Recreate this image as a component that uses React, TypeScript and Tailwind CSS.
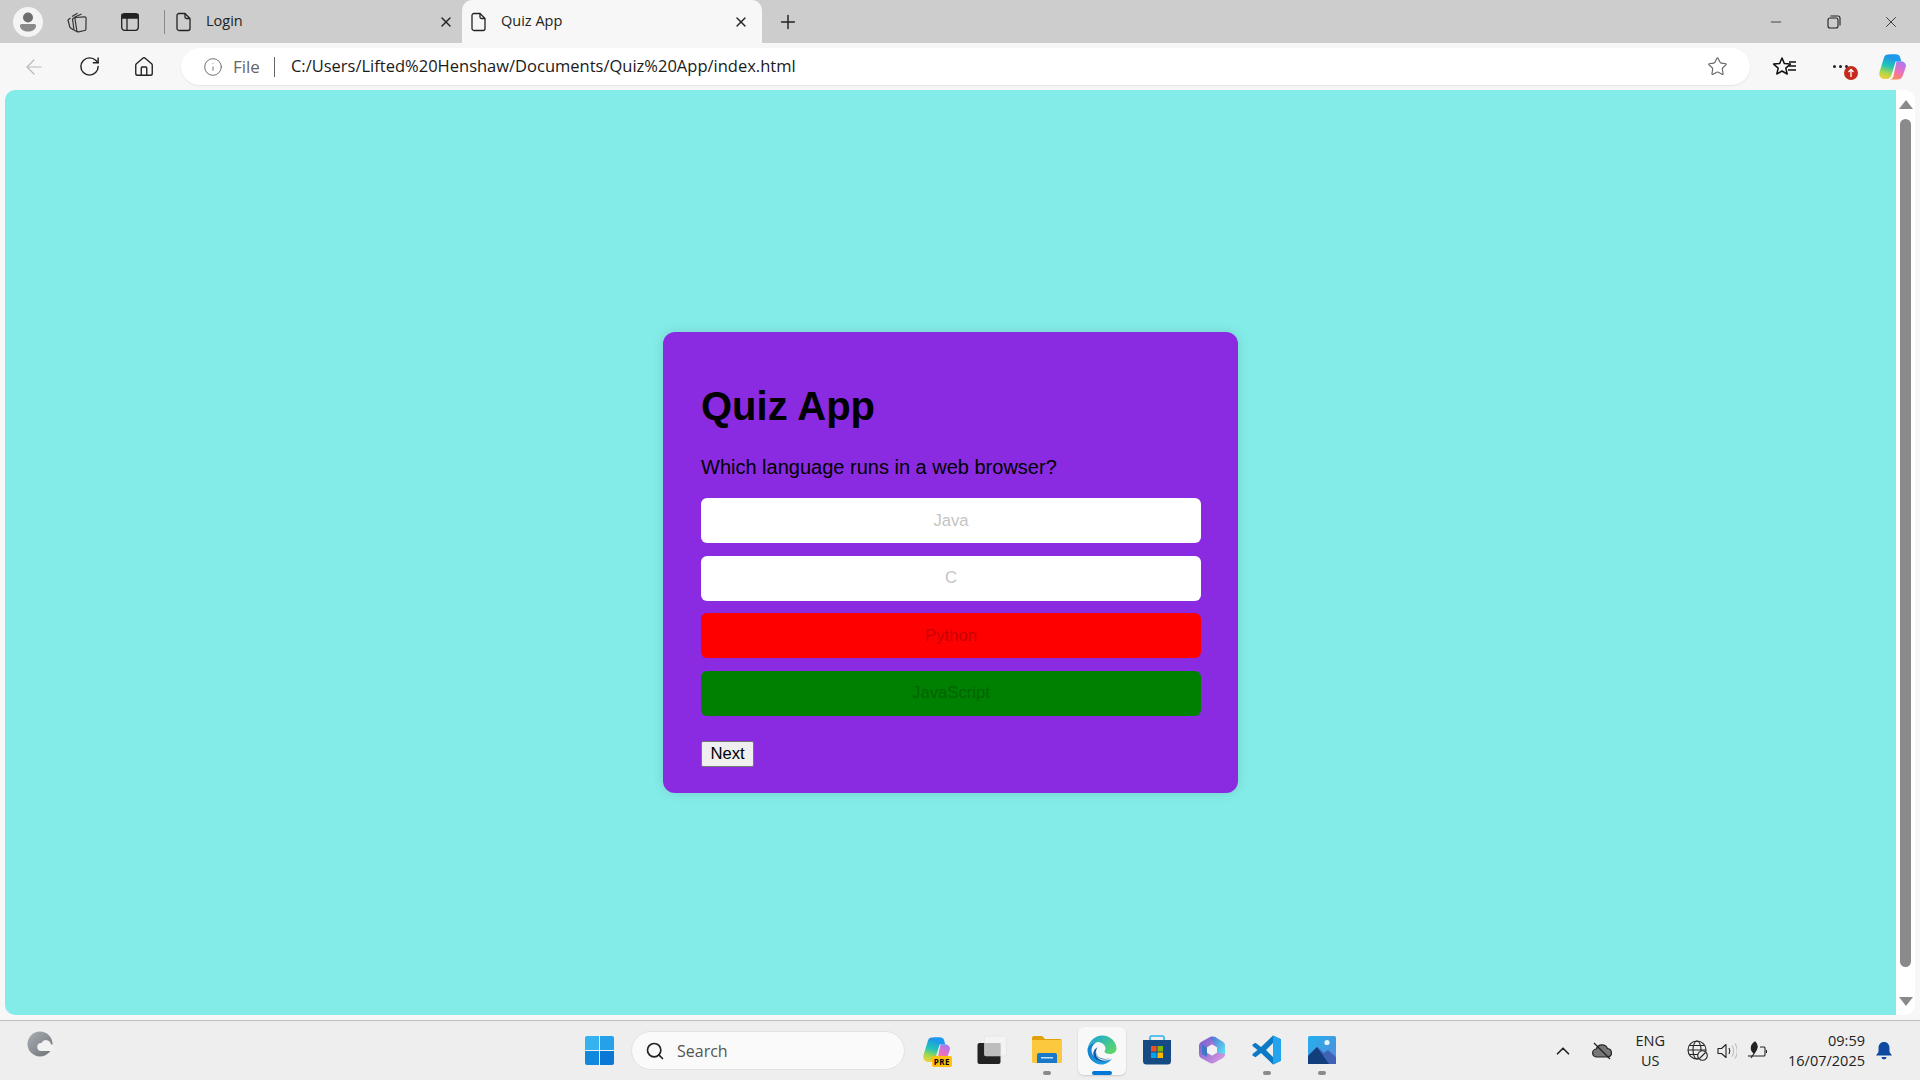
import React from "react";
import { Plus, X, RotateCw, Home, ArrowLeft, Info, Star, ChevronUp, Search, Minus } from "lucide-react";

function FileIcon() {
  return (
    <svg width="16" height="20" viewBox="0 0 16 20" fill="none" stroke="#222" strokeWidth="1.3">
      <path d="M3 1.500h6l5 5V16.500a2 2 0 0 1-2 2H3a2 2 0 0 1-2-2V3.500a2 2 0 0 1 2-2z" />
      <path d="M9 1.500V5a1.500 1.500 0 0 0 1.500 1.500H14" />
    </svg>
  );
}

function Tab({ title, active }: { title: string; active?: boolean }) {
  return (
    <div className={active ? "flex h-[43px] w-[300px] items-center rounded-t-[10px] bg-[#f7f7f7] pl-[9px] pr-[13px]" : "flex h-[43px] w-[289px] items-center pl-[3px] pr-[8px]"}>
      <FileIcon />
      <span className="ml-[14px] flex-1 pb-[2px] text-[14.5px] text-[#222]">{title}</span>
      <X size={16} strokeWidth={2} color="#222" />
    </div>
  );
}

function Copilot({ size, id }: { size: number; id: string }) {
  return (
    <svg width={size} height={size} viewBox="0 0 28 28">
      <defs>
        <linearGradient id={`${id}a`} x1="0.500" y1="0" x2="0.300" y2="1">
          <stop offset="0" stopColor="#1e8fef" />
          <stop offset="0.45" stopColor="#22c4b8" />
          <stop offset="0.75" stopColor="#a8d84a" />
          <stop offset="1" stopColor="#f4d03a" />
        </linearGradient>
        <linearGradient id={`${id}b`} x1="0.700" y1="0" x2="0.300" y2="1">
          <stop offset="0" stopColor="#a979f0" />
          <stop offset="0.5" stopColor="#ea6fc4" />
          <stop offset="1" stopColor="#ff8a50" />
        </linearGradient>
      </defs>
      <path d="M9 1.500h7.500c1 0 1.500.5 1.800 1.500L12.500 22c-.7 2.500-2.500 4-5 4H6c-4 0-6.500-3-5.500-7L5 4.500c.5-2 2-3 4-3z" fill={`url(#${id}a)`} />
      <path d="M17.500 8.500h5c3 0 5 2.500 4.300 5.500L24 22c-.8 3-3 4.500-6 4.500h-7.500c2 0 3.500-1.500 4-3.500z" fill={`url(#${id}b)`} />
      <path d="M10 1.500h8c1.500 0 2.500 1 3 2.500l1.300 4.500H17z" fill="#1c9af0" />
    </svg>
  );
}

function TabStrip() {
  return (
    <div className="flex h-[43px] items-center bg-[#cdcdcd] pl-[13px]">
      <div className="flex h-[30px] w-[30px] items-center justify-center rounded-full bg-[#f4f4f4]">
        <svg width="22" height="24" viewBox="0 0 22 24" fill="#6e6e6e">
          <circle cx="11" cy="7.500" r="5" />
          <path d="M3 15.500c0-1 .8-1.500 2-1.500h12c1.200 0 2 .5 2 1.500v.5c0 3.500-4 5.500-8 5.500s-8-2-8-5.500z" fill="#8a8a8a" />
        </svg>
      </div>
      <svg className="ml-[21px]" width="24" height="24" viewBox="0 0 24 24" fill="none" stroke="#333" strokeWidth="1.200" strokeLinejoin="round">
        <path d="M11.500 7.500l9-.7a1.500 1.500 0 0 1 1.600 1.500l-.2 10.700a1.500 1.500 0 0 1-1.300 1.500l-6 1.300a1.500 1.500 0 0 1-1.800-1.300L11 9a1.500 1.500 0 0 1 .5-1.500z" />
        <path d="M11 7.500l-.5-.3 7-3.200M10.500 7.500L8.500 9l1.500 11 3.500 2" />
        <path d="M8 6.500l5.500-3.300M6.500 8l-2.500 2 2 7.500 3.500 2.500" />
      </svg>
      <svg className="ml-[33px]" width="18" height="18" viewBox="0 0 18 18" fill="none" stroke="#222" strokeWidth="1.300">
        <rect x="0.700" y="0.700" width="16.600" height="16.600" rx="3" />
        <path d="M1 1.500h16v3.500H1z" fill="#222" />
        <path d="M6 5v12" />
      </svg>
      <span className="ml-[25px] h-[24px] w-[1px] bg-[#8a8a8a]" />
      <div className="ml-[8px]"><Tab title="Login" /></div>
      <Tab title="Quiz App" active />
      <Plus size={22} strokeWidth={1.6} color="#222" className="ml-[15px]" />
      <div className="flex-1" />
      <div className="flex items-center pr-[20px]">
        <Minus size={16} strokeWidth={1.2} color="#222" />
        <svg className="ml-[43px]" width="14" height="14" viewBox="0 0 14 14" fill="none" stroke="#222" strokeWidth="1.100">
          <rect x="1" y="3" width="10" height="10" rx="2" />
          <path d="M3.500 1h7.500a2 2 0 0 1 2 2v7.500" />
        </svg>
        <X size={18} strokeWidth={1.1} color="#222" className="ml-[41px]" />
      </div>
    </div>
  );
}

function Toolbar() {
  return (
    <div className="flex h-[47px] items-center bg-[#f7f7f7] pl-[22px]">
      <ArrowLeft size={24} strokeWidth={1.2} color="#b9b9b9" />
      <RotateCw size={23} strokeWidth={1.5} color="#222" className="ml-[32px]" />
      <Home size={22} strokeWidth={1.5} color="#222" className="ml-[32px]" />
      <div className="ml-[26px] flex h-[37px] w-[1569px] items-center rounded-full bg-white pl-[22px] pr-[22px] shadow-[0_1px_2px_rgba(0,0,0,0.08)]">
        <Info size={20} strokeWidth={1.1} color="#666" />
        <span className="ml-[10px] text-[17px] text-[#666]">File</span>
        <span className="ml-[14px] h-[20px] w-[1px] bg-[#666]" />
        <span className="ml-[16px] flex-1 text-[16.5px] text-[#1a1a1a]">C:/Users/Lifted%20Henshaw/Documents/Quiz%20App/index.html</span>
        <Star size={21} strokeWidth={1.3} color="#666" />
      </div>
      <svg className="ml-[22px]" width="26" height="24" viewBox="0 0 26 24" fill="none" stroke="#111" strokeWidth="1.500" strokeLinejoin="round">
        <path d="M10 3l2.400 5.600 6 .5-4.600 4 1.400 5.900L10 16l-5.200 3 1.400-5.900-4.600-4 6-.5z" />
        <path d="M17 7h7M17 11h7M16 15h8" />
      </svg>
      <div className="relative ml-[29px] flex w-[26px] justify-center">
        <div className="flex gap-[3px]">
          <span className="h-[3px] w-[3px] rounded-full bg-[#222]" />
          <span className="h-[3px] w-[3px] rounded-full bg-[#222]" />
          <span className="h-[3px] w-[3px] rounded-full bg-[#222]" />
        </div>
        <div className="absolute left-[17px] top-[1px] flex h-[14px] w-[14px] items-center justify-center rounded-full bg-[#c42b1c]">
          <svg width="8" height="10" viewBox="0 0 8 10" fill="none" stroke="#fff" strokeWidth="1.300"><path d="M4 9V1.500M1.500 4L4 1.500 6.500 4" /></svg>
        </div>
      </div>
      <div className="ml-[26px]">
        <Copilot size={28} id="cp1" />
      </div>
    </div>
  );
}

function Option({ label, bg, color }: { label: string; bg: string; color: string }) {
  return (
    <button className={`flex h-[45px] w-full items-center justify-center rounded-[6px] pb-[1px] text-[16.67px] ${bg} ${color}`}>{label}</button>
  );
}

function QuizCard() {
  return (
    <div className="mt-[20px] flex h-[461px] w-[575px] flex-col rounded-[12px] bg-[#8a2be2] pl-[38px] pr-[37px] pt-[51px] shadow-[0_0_12px_rgba(0,0,0,0.12)] font-['Liberation_Sans',sans-serif] text-black">
      <h1 className="text-[40px] font-bold leading-[46px]">Quiz App</h1>
      <p className="mt-[27px] text-[20px] leading-[23px]">Which language runs in a web browser?</p>
      <div className="mt-[19px] flex flex-col gap-[12.5px]">
        <Option label="Java" bg="bg-white" color="text-[#c4c4c4]" />
        <Option label="C" bg="bg-white" color="text-[#c4c4c4]" />
        <Option label="Python" bg="bg-[#ff0000]" color="text-[#c80000]" />
        <Option label="JavaScript" bg="bg-[#008000]" color="text-[#006400]" />
      </div>
      <button className="mt-[25.5px] h-[26px] w-[53px] self-start rounded-[2px] border border-[#767676] bg-[#efefef] text-[16.67px] leading-[20px] text-black">Next</button>
    </div>
  );
}

function Scrollbar() {
  return (
    <div className="flex w-[19px] flex-col items-center rounded-r-[10px] bg-white pb-[9px] pt-[10px]">
      <div className="h-0 w-0 border-x-[7px] border-b-[9px] border-x-transparent border-b-[#8a8a8a]" />
      <div className="mt-[10px] w-[11px] flex-1 rounded-full bg-[#8a8a8a]" />
      <div className="mt-[30px] h-0 w-0 border-x-[7px] border-t-[9px] border-x-transparent border-t-[#8a8a8a]" />
    </div>
  );
}

function TaskIcon({ children, dot, active }: { children: React.ReactNode; dot?: boolean; active?: boolean }) {
  return (
    <div className={active ? "relative ml-[7px] flex h-[48px] w-[48px] items-center justify-center rounded-[6px] bg-[#f8f8f8] pb-[2px] shadow-[0_1px_2px_rgba(0,0,0,0.15)]" : "relative ml-[7px] flex h-[48px] w-[48px] items-center justify-center pb-[2px]"}>
      {children}
      {dot && <span className="absolute bottom-[0px] left-[20px] h-[4px] w-[8px] rounded-full bg-[#8a8a8a]" />}
      {active && <span className="absolute bottom-[0px] left-[14px] h-[4px] w-[20px] rounded-full bg-[#0078d4]" />}
    </div>
  );
}

function Taskbar() {
  return (
    <div className="relative flex h-[60px] items-center border-t border-[#bdbdbd] bg-[#eeeeee] font-['Open_Sans',sans-serif]">
      <svg className="absolute left-[27px] top-[10px]" width="28" height="28" viewBox="0 0 28 28">
        <defs><linearGradient id="wx" x1="0" y1="0" x2="1" y2="1"><stop offset="0" stopColor="#a9afb6" /><stop offset="1" stopColor="#6d7277" /></linearGradient></defs>
        <circle cx="13" cy="13" r="12.500" fill="url(#wx)" />
        <path d="M14 20a4 4 0 0 1 .5-8 5 5 0 0 1 9.500 1.500 3.300 3.300 0 0 1 1 6.500z" fill="#f2f2f2" />
      </svg>
      <div className="ml-[585px] flex h-[29px] w-[29px] flex-wrap content-between justify-between">
        <span className="h-[14px] w-[14px] rounded-tl-[2px] bg-[#35b2f0]" />
        <span className="h-[14px] w-[14px] rounded-tr-[2px] bg-[#25a1ea]" />
        <span className="h-[14px] w-[14px] rounded-bl-[2px] bg-[#0f88dd]" />
        <span className="h-[14px] w-[14px] rounded-br-[2px] bg-[#0a78d4]" />
      </div>
      <div className="ml-[17px] flex h-[39px] w-[274px] items-center rounded-full border border-[#e2e2e2] bg-[#fafafa] pl-[13px]">
        <Search size={20} strokeWidth={2} color="#222" />
        <span className="ml-[12px] text-[16px] text-[#555]">Search</span>
      </div>
      <div className="ml-[1px]" />
      <TaskIcon>
        <div className="relative">
          <Copilot size={28} id="cp2" />
          <span className="absolute bottom-[-3px] right-[-1px] rounded-[2px] bg-[#ffc010] px-[2px] text-[8px] font-bold leading-[11px] tracking-[0.5px] text-black">PRE</span>
        </div>
      </TaskIcon>
      <TaskIcon>
        <svg width="30" height="30" viewBox="0 0 30 30">
          <rect x="0.500" y="8" width="23" height="21" rx="2" fill="#222" />
          <rect x="7.500" y="1" width="22" height="20" rx="2" fill="#f4f4f4" fillOpacity="0.8" stroke="#ddd" strokeWidth="0.500" />
          <rect x="7.500" y="8" width="16" height="13" fill="#bdbdbd" />
        </svg>
      </TaskIcon>
      <TaskIcon dot>
        <svg width="30" height="27" viewBox="0 0 30 27">
          <path d="M0 2a2 2 0 0 1 2-2h8l3 3h15a2 2 0 0 1 2 2v3H0z" fill="#e0a106" />
          <path d="M0 4h30v22a1 1 0 0 1-1 1H1a1 1 0 0 1-1-1z" fill="#fcc93e" />
          <path d="M5 19a2 2 0 0 1 2-2h16a2 2 0 0 1 2 2v8H5z" fill="#1a78c8" />
          <rect x="9" y="21" width="12" height="1.500" fill="#bfe0f7" />
        </svg>
      </TaskIcon>
      <TaskIcon active>
        <svg width="30" height="30" viewBox="0 0 30 30">
          <defs>
            <linearGradient id="eg" x1="0.100" y1="0" x2="1" y2="0.700"><stop offset="0" stopColor="#1aa6dc" /><stop offset="1" stopColor="#5bd66b" /></linearGradient>
            <linearGradient id="eb" x1="0" y1="0" x2="0.700" y2="1"><stop offset="0" stopColor="#0f78cc" /><stop offset="1" stopColor="#1b9de2" /></linearGradient>
          </defs>
          <path d="M0.500 14C2 6 8 .5 15 .5c8.500 0 14.500 6.500 14.500 13 0 3-2.500 5.500-6.500 5.500-3 0-5.500-1-5.500-2.500 0-1 1-1.500 1-3 0-3.500-3.500-6.500-8-6.500C6 7 2 10 .5 14z" fill="url(#eg)" />
          <path d="M.5 14C2 10 6 7 10.500 7 7 8 4.500 11.500 4.500 15c0 6 5.500 11 12.500 11 3 0 6-1 8-2.500-2.500 3.500-6 6-10.500 6C6.500 29.500 0 22.500.5 14z" fill="url(#eb)" />
          <path d="M11 12c-2.500 2-3 6.500-1 10 2.500 3.500 8 5 14 2.500-4.500 2.500-10.500 2.500-14.500 0C5 21.500 5 15 11 12z" fill="#0c59a4" />
          <path d="M10.500 12.500c-2 2.500-2 6 .5 9 2 2 6.500 3 12 2-3 1-7 1.500-10 0-2-1-3.500-3-4-5 0-2.500.5-4.500 1.500-6z" fill="#0c59a4" />
        </svg>
      </TaskIcon>
      <TaskIcon>
        <svg width="30" height="30" viewBox="0 0 30 30">
          <path d="M8 6V2.500A1.500 1.500 0 0 1 9.500 1h11A1.500 1.500 0 0 1 22 2.500V6" fill="none" stroke="#2cb2f0" strokeWidth="1.600" />
          <path d="M1 5h28v21a3.500 3.500 0 0 1-3.500 3.500h-21A3.500 3.500 0 0 1 1 26z" fill="#164a82" />
          <rect x="9" y="11" width="5.500" height="5.500" fill="#f25022" />
          <rect x="15.500" y="11" width="5.500" height="5.500" fill="#7fba00" />
          <rect x="9" y="17.500" width="5.500" height="5.500" fill="#00a4ef" />
          <rect x="15.500" y="17.500" width="5.500" height="5.500" fill="#ffb900" />
        </svg>
      </TaskIcon>
      <TaskIcon>
        <svg width="28" height="28" viewBox="0 0 28 28">
          <defs>
            <linearGradient id="m1" x1="0" y1="0.200" x2="0.900" y2="1"><stop offset="0" stopColor="#7b5fd0" /><stop offset="1" stopColor="#d99be0" /></linearGradient>
            <linearGradient id="m2" x1="0" y1="0" x2="1" y2="0.800"><stop offset="0" stopColor="#4f6fd0" /><stop offset="1" stopColor="#5cdcf4" /></linearGradient>
          </defs>
          <path d="M14 .5c1 0 2 .3 3 .9l7.500 4.300c1.700 1 2.500 2.500 2.500 4.300v8c0 1.800-.8 3.300-2.500 4.300L17 26.600c-2 1.200-4 1.200-6 0l-7.500-4.300C1.800 21.300 1 19.800 1 18v-8c0-1.800.8-3.300 2.500-4.300L11 1.400c1-.6 2-.9 3-.9zM14 8.500l-5 3v5l5 3 5-3v-5z" fill="url(#m1)" fillRule="evenodd" />
          <path d="M12 1l5-.3 7.500 5c1.700 1 2.500 2.500 2.500 4.300v8l-8-1.500v-5z" fill="url(#m2)" />
          <path d="M9 11.500v9.500l-5-3V8z" fill="#3f78c4" />
          <path d="M14 8.500l5 3v5l-5 3-5-3v-5z" fill="#f2f2f2" />
        </svg>
      </TaskIcon>
      <TaskIcon dot>
        <svg width="30" height="30" viewBox="0 0 30 30">
          <path d="M21 .5l8 3.800v21.400l-8 3.800L9 18l-5.500 4.200L.5 20.500v-1.500L5.500 15 .5 11V9.500L3.500 7.800 9 12zM21 8l-7 7 7 7z" fill="#0a7ac6" />
          <path d="M21 .5l8 3.800v21.400l-8 3.800z" fill="#24a4ee" />
        </svg>
      </TaskIcon>
      <TaskIcon dot>
        <svg width="28" height="28" viewBox="0 0 28 28">
          <defs><linearGradient id="ph" x1="0" y1="0" x2="1" y2="1"><stop offset="0" stopColor="#23b0ee" /><stop offset="1" stopColor="#5a8ad8" /></linearGradient></defs>
          <rect width="28" height="28" rx="1.500" fill="url(#ph)" />
          <circle cx="19" cy="6.500" r="2.600" fill="#e6f4fc" />
          <path d="M0 20l9-9 7 6 4-3 8 7v7H0z" fill="#3f62b5" />
          <path d="M0 20l9-9 12 17H0z" fill="#133e7c" />
        </svg>
      </TaskIcon>
      <div className="flex-1" />
      <ChevronUp size={22} strokeWidth={1.8} color="#222" className="mr-[17px]" />
      <svg className="mr-[23px]" width="22" height="20" viewBox="0 0 22 20" fill="#777" stroke="#222" strokeWidth="1.200">
        <path d="M6 16a4 4 0 0 1-.7-8 6 6 0 0 1 11.200-.5A4.300 4.300 0 0 1 17 16z" />
        <path d="M3 2l16 16" />
      </svg>
      <div className="mr-[22px] flex flex-col items-center text-[14.5px] leading-[20px] text-[#222]">
        <span>ENG</span>
        <span>US</span>
      </div>
      <svg className="mr-[9px]" width="21" height="21" viewBox="0 0 21 21" fill="none" stroke="#222" strokeWidth="1.100">
        <circle cx="10" cy="10" r="9" />
        <ellipse cx="10" cy="10" rx="4" ry="9" />
        <path d="M1 10h18M2.500 5.500h15M2.500 14.500h15" />
        <circle cx="15.500" cy="15.500" r="4.800" fill="#eeeeee" />
        <path d="M12.500 18.500l6-6" />
      </svg>
      <svg className="mr-[10px]" width="20" height="20" viewBox="0 0 20 20" fill="none" stroke="#222" strokeWidth="1.100" strokeLinejoin="round">
        <path d="M1 7.500h3.500L9 3.500v13L4.500 12.500H1z" />
        <path d="M12 7c1 1.800 1 4.200 0 6" />
        <path d="M15 4.500c2 3.300 2 7.700 0 11M18 2.500c2.800 4.500 2.800 10.500 0 15" stroke="#bdbdbd" />
      </svg>
      <svg className="mr-[21px]" width="20" height="20" viewBox="0 0 20 20" fill="none" stroke="#222" strokeWidth="1.100">
        <path d="M6 15h11a1 1 0 0 0 1-1V7a1 1 0 0 0-1-1h-4" />
        <path d="M20 9v3" strokeWidth="2" />
        <path d="M1 15h5" />
        <path d="M8 1c3 3 3 7-1 11-4-3-3.500-8 1-11z" fill="#222" />
        <path d="M4 17l4-6" />
      </svg>
      <div className="mr-[10px] flex flex-col items-end text-[14.5px] leading-[20px] text-[#222]">
        <span>09:59</span>
        <span>16/07/2025</span>
      </div>
      <svg className="mr-[27px]" width="18" height="20" viewBox="0 0 18 20" fill="#0f4aa0">
        <path d="M9 1c3.500 0 5.500 2.700 5.500 6v4l2.500 3.500H1L3.500 11V7C3.500 3.700 5.500 1 9 1z" />
        <path d="M6.500 16h5a2.500 2.500 0 0 1-5 0z" />
      </svg>
    </div>
  );
}

export default function App() {
  return (
    <div className="flex h-[1080px] w-[1920px] flex-col overflow-hidden bg-[#f7f7f7] font-['Open_Sans',sans-serif]">
      <TabStrip />
      <Toolbar />
      <div className="flex h-[925px] px-[5px]">
        <div className="flex flex-1 items-center justify-center rounded-l-[10px] bg-[#84ece8]">
          <QuizCard />
        </div>
        <Scrollbar />
      </div>
      <div className="h-[5px]" />
      <Taskbar />
    </div>
  );
}
